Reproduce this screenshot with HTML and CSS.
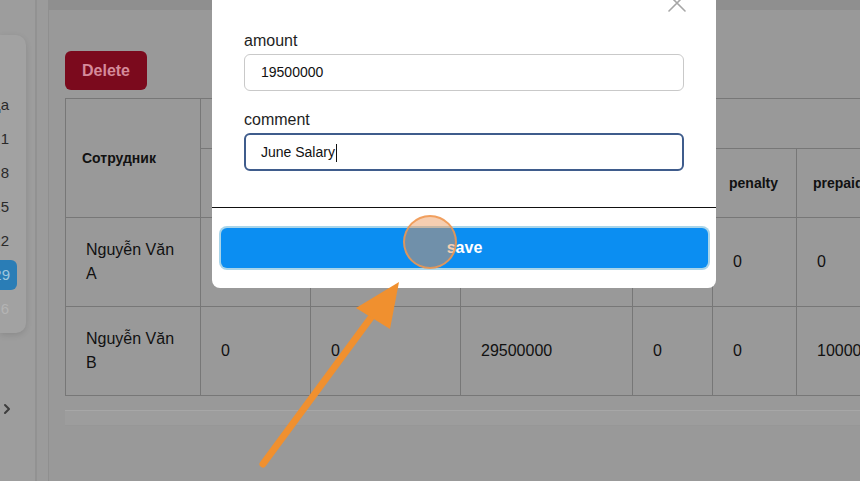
FILE: index.html
```html
<!DOCTYPE html>
<html lang="ru">
<head>
    <meta charset="UTF-8">
    <meta name="viewport" content="width=device-width, initial-scale=1.0">
    <title>Зарплата</title>
    <link rel="stylesheet" href="styles.css">
</head>
<body>
    <div class="app">
        <!-- Боковая панель с датами -->
        <aside class="sidebar">
            <div class="date-card">
                <span class="date">Пятница</span>
                <span class="date">1</span>
                <span class="date">8</span>
                <span class="date">15</span>
                <span class="date">22</span>
                <span class="date date-active">29</span>
                <span class="date date-muted">6</span>
            </div>
            <div class="chevron">
                <svg width="8" height="12" viewBox="0 0 8 12"><polyline points="2,2 6,6 2,10" fill="none" stroke="#3d3d3d" stroke-width="2" stroke-linecap="round" stroke-linejoin="round"/></svg>
            </div>
        </aside>
        <div class="rail"></div>

        <main class="main">
            <div class="topbar"></div>
            <div class="content">
                <button class="btn-delete">Delete</button>
                <div class="table-wrap">
                    <table class="salary-table">
                        <colgroup>
                            <col style="width:135px">
                            <col style="width:110px">
                            <col style="width:150px">
                            <col style="width:172px">
                            <col style="width:80px">
                            <col style="width:84px">
                            <col style="width:120px">
                        </colgroup>
                        <thead>
                            <tr class="head-top">
                                <th rowspan="2">Сотрудник</th>
                                <th colspan="6"></th>
                            </tr>
                            <tr class="head-sub">
                                <th>bonus</th>
                                <th>allowance</th>
                                <th>salary</th>
                                <th>tax</th>
                                <th>penalty</th>
                                <th>prepaid</th>
                            </tr>
                        </thead>
                        <tbody>
                            <tr>
                                <td>Nguyễn Văn A</td>
                                <td>0</td>
                                <td>0</td>
                                <td>19500000</td>
                                <td>0</td>
                                <td>0</td>
                                <td>0</td>
                            </tr>
                            <tr>
                                <td>Nguyễn Văn B</td>
                                <td>0</td>
                                <td>0</td>
                                <td>29500000</td>
                                <td>0</td>
                                <td>0</td>
                                <td>10000000</td>
                            </tr>
                        </tbody>
                    </table>
                </div>
                <div class="scrollbar"></div>
            </div>
        </main>
    </div>

    <!-- Модальное окно -->
    <div class="modal">
        <svg class="modal-close" width="20" height="20" viewBox="0 0 20 20"><path d="M2 2 L18 18 M18 2 L2 18" stroke="#a6a6a6" stroke-width="1.6" stroke-linecap="round"/></svg>
        <div class="modal-body">
            <label class="field-label">amount</label>
            <div class="field-input">19500000</div>
            <label class="field-label">comment</label>
            <div class="field-input field-focus">June Salary<span class="caret"></span></div>
        </div>
        <div class="modal-footer">
            <button class="btn-save">save</button>
        </div>
    </div>

    <!-- Аннотация: курсор и стрелка -->
    <div class="click-mark"></div>
    <svg class="arrow" width="860" height="481" viewBox="0 0 860 481">
        <line x1="263" y1="464" x2="378" y2="308" stroke="#f0902f" stroke-width="7" stroke-linecap="round"/>
        <polygon points="399,282 356,308 390,329" fill="#f0902f"/>
    </svg>
</body>
</html>
```

FILE: styles.css
```css
body {
    margin: 0;
    font-family: 'Liberation Sans', Arial, sans-serif;
    background: #999999;
    color: #111111;
    overflow: hidden;
    width: 860px;
    height: 481px;
    position: relative;
}
.app {
    display: flex;
    height: 481px;
}
.sidebar {
    width: 35px;
    flex-shrink: 0;
    background: #9d9d9d;
    display: flex;
    flex-direction: column;
}
.date-card {
    margin-top: 35px;
    width: 26px;
    height: 298px;
    box-sizing: border-box;
    padding-top: 55px;
    background: #a2a2a2;
    border-radius: 0 10px 10px 0;
    box-shadow: 0 2px 6px rgba(0, 0, 0, 0.12);
    display: flex;
    flex-direction: column;
    align-items: flex-end;
    gap: 4px;
    overflow: hidden;
}
.date {
    display: block;
    height: 30px;
    line-height: 30px;
    padding: 0 9px 0 0;
    font-size: 15px;
    color: #2a2a2a;
    white-space: nowrap;
    text-align: right;
    margin-right: 8px;
}
.date-active {
    background: #2a7db6;
    color: #9fc7de;
    border-radius: 6px;
    padding-right: 7px;
    margin-right: 9px;
}
.date-muted {
    color: #b4b4b4;
}
.chevron {
    margin-top: 68px;
    padding-left: 3px;
}
.rail {
    width: 11px;
    flex-shrink: 0;
    background: #9b9b9b;
    border-left: 2px solid #929292;
    border-right: 1px solid #8f8f8f;
}
.main {
    flex: 1;
    min-width: 0;
}
.topbar {
    height: 10px;
    background: #8f8f8f;
}
.content {
    padding: 41px 0 0 16px;
}
.btn-delete {
    display: block;
    width: 82px;
    height: 39px;
    border: none;
    border-radius: 6px;
    background: #7b0a1d;
    color: #d58b9b;
    font-family: inherit;
    font-size: 16px;
    font-weight: 600;
}
.table-wrap {
    margin-top: 8px;
    width: 900px;
}
.salary-table {
    border-collapse: collapse;
    table-layout: fixed;
    width: 851px;
}
.salary-table th,
.salary-table td {
    border: 1px solid #777777;
    text-align: left;
    vertical-align: middle;
}
.salary-table th {
    padding: 0 16px;
    font-size: 14px;
    font-weight: 700;
}
.head-top th {
    height: 49px;
}
.head-sub th {
    height: 68px;
}
.salary-table td {
    height: 88px;
    padding: 0 20px;
    font-size: 16px;
    line-height: 24px;
}
.scrollbar {
    margin-top: 14px;
    height: 15px;
    background: #9d9d9d;
    border-top: 1px solid #a7a7a7;
    box-shadow: inset 0 -1px 0 #979797;
}
.modal {
    position: absolute;
    left: 212px;
    top: -20px;
    width: 504px;
    height: 308px;
    background: #ffffff;
    border-radius: 8px;
}
.modal-close {
    position: absolute;
    left: 455px;
    top: 13px;
}
.modal-body {
    padding: 51px 32px 36px;
}
.field-label {
    display: block;
    font-size: 16px;
    line-height: 20px;
    color: #1e1e1e;
    margin-bottom: 3px;
}
.field-input {
    height: 37px;
    box-sizing: border-box;
    border: 1px solid #c9c9c9;
    border-radius: 6px;
    padding: 0 16px;
    font-size: 14px;
    line-height: 35px;
    color: #111111;
    margin-bottom: 19px;
}
.field-focus {
    height: 38px;
    border: 2px solid #3f5c8c;
    padding-left: 15px;
    line-height: 34px;
    margin-bottom: 0;
}
.caret {
    display: inline-block;
    width: 1px;
    height: 18px;
    background: #111111;
    vertical-align: middle;
    margin-left: 1px;
}
.modal-footer {
    border-top: 1px solid #111111;
    padding: 20px 8px 0 9px;
}
.btn-save {
    display: block;
    width: 100%;
    height: 40px;
    border: none;
    border-radius: 6px;
    background: #0b8ef2;
    box-shadow: 0 0 0 2px #a9d5ea;
    color: #ffffff;
    font-family: inherit;
    font-size: 16px;
    font-weight: 700;
}
.click-mark {
    position: absolute;
    left: 403px;
    top: 215px;
    width: 50px;
    height: 50px;
    border-radius: 50%;
    border: 2px solid rgba(240, 150, 80, 0.85);
    background: rgba(236, 146, 82, 0.45);
}
.arrow {
    position: absolute;
    left: 0;
    top: 0;
    pointer-events: none;
}
```
